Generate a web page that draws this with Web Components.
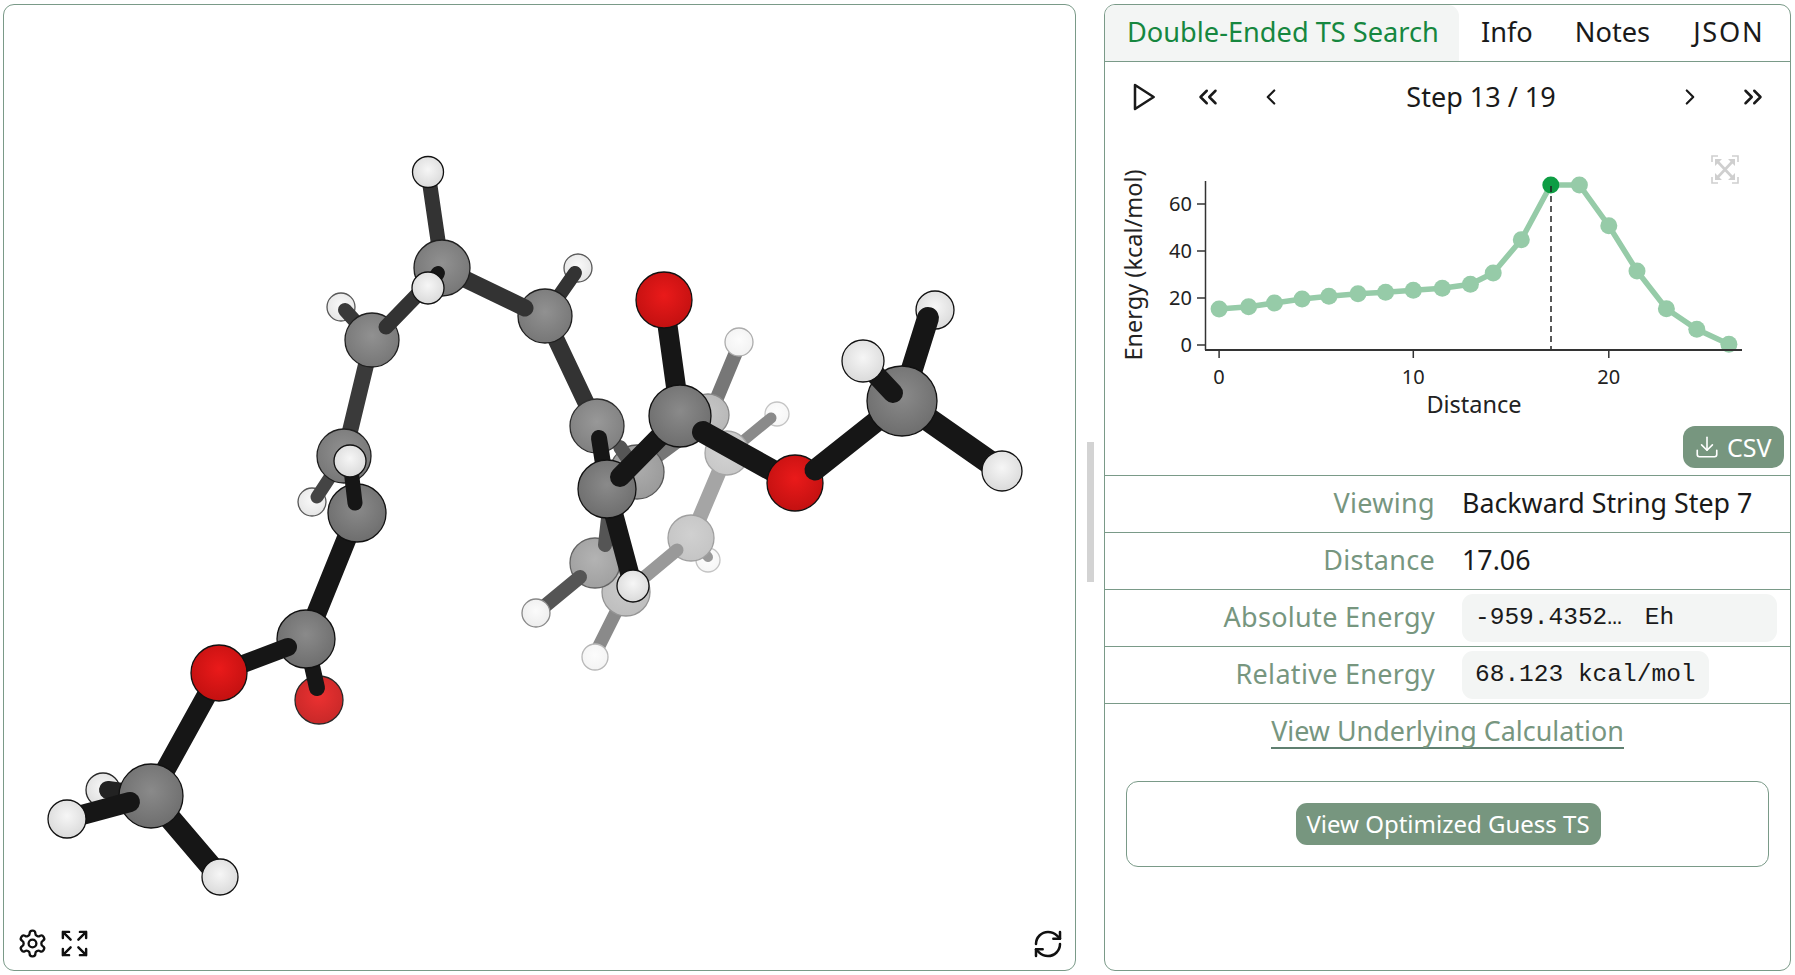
<!DOCTYPE html>
<html lang="en">
<head>
<meta charset="utf-8">
<title>Double-Ended TS Search</title>
<style>
    html, body { margin: 0; height: 100%; background: #fff; }
    body { font-family: "Noto Sans", sans-serif; color: #1a1a1a; overflow: hidden; }
</style>
</head>
<body>
<app-shell>
    <mol-viewer slot="viewer"></mol-viewer>
    <ts-panel slot="panel">
        <tab-bar></tab-bar>
        <step-nav></step-nav>
        <energy-chart></energy-chart>
        <info-row plain label="Viewing">Backward String Step 7</info-row>
        <info-row plain label="Distance">17.06</info-row>
        <info-row label="Absolute Energy"><code-pill wide>-959.4352…&nbsp;<span style="margin-left:8px">Eh</span></code-pill></info-row>
        <info-row label="Relative Energy"><code-pill>68.123 kcal/mol</code-pill></info-row>
        <calc-link></calc-link>
        <guess-box></guess-box>
    </ts-panel>
</app-shell>

<script>
const lucide = {
    play: '<polygon points="6 3 20 12 6 21 6 3"/>',
    dleft: '<path d="m11 17-5-5 5-5"/><path d="m18 17-5-5 5-5"/>',
    left: '<path d="m15 18-6-6 6-6"/>',
    right: '<path d="m9 18 6-6-6-6"/>',
    dright: '<path d="m6 17 5-5-5-5"/><path d="m13 17 5-5-5-5"/>',
    gear: '<path d="M12.22 2h-.44a2 2 0 0 0-2 2v.18a2 2 0 0 1-1 1.73l-.43.25a2 2 0 0 1-2 0l-.15-.08a2 2 0 0 0-2.73.73l-.22.38a2 2 0 0 0 .73 2.73l.15.1a2 2 0 0 1 1 1.72v.51a2 2 0 0 1-1 1.74l-.15.09a2 2 0 0 0-.73 2.73l.22.38a2 2 0 0 0 2.73.73l.15-.08a2 2 0 0 1 2 0l.43.25a2 2 0 0 1 1 1.73V20a2 2 0 0 0 2 2h.44a2 2 0 0 0 2-2v-.18a2 2 0 0 1 1-1.73l.43-.25a2 2 0 0 1 2 0l.15.08a2 2 0 0 0 2.73-.73l.22-.39a2 2 0 0 0-.73-2.73l-.15-.08a2 2 0 0 1-1-1.74v-.5a2 2 0 0 1 1-1.74l.15-.09a2 2 0 0 0 .73-2.73l-.22-.38a2 2 0 0 0-2.73-.73l-.15.08a2 2 0 0 1-2 0l-.43-.25a2 2 0 0 1-1-1.73V4a2 2 0 0 0-2-2z"/><circle cx="12" cy="12" r="3"/>',
    expand: '<path d="m21 21-6-6m6 6v-4.8m0 4.8h-4.8"/><path d="M3 16.2V21m0 0h4.8M3 21l6-6"/><path d="M21 7.8V3m0 0h-4.8M21 3l-6 6"/><path d="M3 7.8V3m0 0h4.8M3 3l6 6"/>',
    refresh: '<path d="M3 12a9 9 0 0 1 9-9 9.75 9.75 0 0 1 6.74 2.74L21 8"/><path d="M21 3v5h-5"/><path d="M21 12a9 9 0 0 1-9 9 9.75 9.75 0 0 1-6.74-2.74L3 16"/><path d="M8 16H3v5"/>',
    download: '<path d="M21 15v4a2 2 0 0 1-2 2H5a2 2 0 0 1-2-2v-4"/><polyline points="7 10 12 15 17 10"/><line x1="12" y1="15" x2="12" y2="3"/>'
};

function icon(name, size, stroke) {
    return `<svg width="${size}" height="${size}" viewBox="0 0 24 24" fill="none" stroke="currentColor" stroke-width="${stroke}" stroke-linecap="round" stroke-linejoin="round">${lucide[name]}</svg>`;
}

class AppShell extends HTMLElement {
    constructor() {
        super();
        this.shadow = this.attachShadow({ mode: 'open' });
    }

    connectedCallback() {
        this.shadow.innerHTML = /*html*/`
        <style>
            :host { display: flex; height: 975px; box-sizing: border-box; padding: 4px 4px 4px 3px; }
            ::slotted([slot="viewer"]) { width: 1073px; flex: none; }
            ::slotted([slot="panel"]) { flex: 1; min-width: 0; }
            .handle { flex: none; width: 7px; height: 140px; margin: 438px 10px 0 11px; background: #d3d3d3; }
        </style>
        <slot name="viewer"></slot>
        <div class="handle"></div>
        <slot name="panel"></slot>
        `;
    }
}
customElements.define('app-shell', AppShell);

// [element, x, y, radius, fog] and [x1, y1, x2, y2, width, colour], in paint order
const H = 'H', C = 'C', O = 'O';
const scene = [
    [H, 708, 560, 12, .75],
    [702, 550, 708, 557, 10, '#999'],
    [H, 777, 414, 12, .75],
    [738, 445, 771, 418, 11, '#8a8a8a'],
    [739, 345, 712, 410, 14, '#777'],
    [H, 739, 342, 14, .65],
    [C, 708, 415, 21, .5],
    [727, 453, 691, 538, 15, '#a5a5a5'],
    [C, 727, 453, 22, .62],
    [C, 691, 538, 23, .6],
    [626, 592, 597, 650, 13, '#8a8a8a'],
    [H, 595, 657, 13, .7],
    [C, 626, 592, 24, .55],
    [677, 550, 635, 585, 13, '#999'],
    [C, 595, 563, 25, .35],
    [580, 577, 540, 610, 14, '#555'],
    [H, 536, 613, 14, .5],
    [605, 545, 610, 500, 14, '#555'],
    [650, 462, 700, 425, 13, '#777'],
    [C, 637, 472, 27, .3],
    [620, 447, 630, 462, 14, '#555'],
    [545, 316, 597, 426, 17, '#333'],
    [C, 597, 426, 27, .12],
    [599, 438, 607, 489, 16, '#161616'],
    [607, 489, 633, 586, 19, '#161616'],
    [H, 633, 586, 16, 0],
    [C, 607, 489, 29, 0],
    [620, 477, 680, 416, 20, '#161616'],

    [680, 416, 664, 300, 20, '#161616'],
    [O, 664, 300, 28, 0],
    [C, 680, 416, 31, 0],
    [703, 432, 795, 483, 22, '#161616'],
    [O, 795, 483, 28, 0],
    [815, 470, 902, 401, 21, '#161616'],
    [902, 401, 1002, 471, 24, '#161616'],
    [H, 1002, 471, 20, 0],
    [H, 935, 310, 19, 0],
    [902, 401, 928, 318, 22, '#161616'],
    [C, 902, 401, 35, 0],
    [893, 393, 863, 361, 20, '#161616'],
    [H, 863, 361, 21, 0],

    [428, 172, 442, 268, 15, '#333'],
    [H, 428, 172, 15.5, 0],
    [H, 578, 268, 14, .3],
    [575, 273, 545, 316, 14, '#333'],
    [C, 545, 316, 27, .06],
    [442, 268, 525, 308, 17, '#333'],
    [C, 442, 268, 28, .06],
    [H, 341, 307, 14, .3],
    [345, 310, 372, 340, 14, '#3a3a3a'],
    [372, 340, 344, 456, 16, '#3a3a3a'],
    [C, 372, 340, 27, .06],
    [386, 327, 420, 292, 15, '#333'],
    [438, 273, 428, 288, 14, '#161616'],
    [H, 428, 288, 16, 0],
    [H, 312, 502, 14, .3],
    [317, 497, 344, 456, 13, '#444'],
    [C, 344, 456, 27, .06],
    [357, 513, 306, 639, 20, '#161616'],
    [C, 357, 513, 29, 0],
    [355, 503, 350, 461, 15, '#161616'],
    [H, 350, 461, 16, 0],

    [O, 319, 700, 24, .1],
    [317, 688, 306, 639, 16, '#161616'],
    [C, 306, 639, 29, 0],
    [288, 647, 219, 673, 18, '#161616'],
    [219, 673, 151, 796, 20, '#161616'],
    [O, 219, 673, 28, 0],
    [H, 103, 790, 17, .1],
    [108, 790, 151, 796, 18, '#222'],
    [151, 796, 220, 877, 22, '#161616'],
    [H, 220, 877, 18, 0],
    [C, 151, 796, 32, 0],
    [130, 802, 67, 819, 20, '#161616'],
    [H, 67, 819, 19, 0]
];

const atomColors = {
    H: ['#f6f6f6', '#d8d8d8'],
    C: ['#8a8a8a', '#6c6c6c'],
    O: ['#ea1a1a', '#c01010']
};

function fogged(hex, fog) {
    const n = parseInt(hex.slice(1), 16);
    const mix = (v) => Math.round(v + (255 - v) * fog);
    return `rgb(${mix(n >> 16)},${mix((n >> 8) & 255)},${mix(n & 255)})`;
}

class MolViewer extends HTMLElement {
    constructor() {
        super();
        this.shadow = this.attachShadow({ mode: 'open' });
    }

    connectedCallback() {
        this.render();
    }

    render() {
        let defs = '';
        let body = '';
        scene.forEach((item, i) => {
            if (typeof item[0] === 'string') {
                const [el, x, y, r, fog] = item;
                const [inner, outer] = atomColors[el];
                defs += `<radialGradient id="g${i}" cx="50%" cy="42%" r="62%"><stop offset="0" stop-color="${fogged(inner, fog)}"/><stop offset="1" stop-color="${fogged(outer, fog)}"/></radialGradient>`;
                body += `<circle cx="${x}" cy="${y}" r="${r}" fill="url(#g${i})" stroke="${fogged('#111111', fog)}" stroke-width="1.3"/>`;
            } else {
                const [x1, y1, x2, y2, w, color] = item;
                body += `<line x1="${x1}" y1="${y1}" x2="${x2}" y2="${y2}" stroke="${color}" stroke-width="${w}" stroke-linecap="round"/>`;
            }
        });

        this.shadow.innerHTML = /*html*/`
        <style>
            :host { display: block; position: relative; box-sizing: border-box; height: 100%; border: 1px solid #7a9a88; border-radius: 11px; overflow: hidden; }
            svg.mol { display: block; width: 100%; height: 100%; }
            .tools { position: absolute; left: 13px; bottom: 11px; display: flex; gap: 11px; color: #111; }
            .reload { position: absolute; right: 11px; bottom: 10px; color: #111; }
            .tools svg, .reload svg { display: block; }
        </style>
        <svg class="mol" viewBox="4 5 1071 965">
            <defs>${defs}</defs>
            ${body}
        </svg>
        <div class="tools">${icon('gear', 31, 1.8)}${icon('expand', 31, 1.9)}</div>
        <div class="reload">${icon('refresh', 32, 1.9)}</div>
        `;
    }
}
customElements.define('mol-viewer', MolViewer);

class TsPanel extends HTMLElement {
    constructor() {
        super();
        this.shadow = this.attachShadow({ mode: 'open' });
    }

    connectedCallback() {
        this.shadow.innerHTML = /*html*/`
        <style>
            :host { display: flex; flex-direction: column; box-sizing: border-box; height: 100%; border: 1px solid #7a9a88; border-radius: 11px; overflow: hidden; }
        </style>
        <slot></slot>
        `;
    }
}
customElements.define('ts-panel', TsPanel);

class TabBar extends HTMLElement {
    constructor() {
        super();
        this.shadow = this.attachShadow({ mode: 'open' });
    }

    connectedCallback() {
        this.shadow.innerHTML = /*html*/`
        <style>
            :host { display: flex; flex: none; height: 57px; box-sizing: border-box; border-bottom: 1px solid #7a9a88; font-size: 27.2px; }
            div { display: flex; align-items: center; padding: 0 21px 3px; white-space: nowrap; }
            .on { color: #16873f; background: #f3f5f4; padding: 0 0 3px 22px; border-radius: 0 11px 0 0; width: 354px; box-sizing: border-box; }
            .info { margin-left: 1px; }
            .json { margin-left: 1px; padding-right: 0; letter-spacing: 1.8px; }
        </style>
        <div class="on">Double-Ended TS Search</div>
        <div class="info">Info</div>
        <div>Notes</div>
        <div class="json">JSON</div>
        `;
    }
}
customElements.define('tab-bar', TabBar);

class StepNav extends HTMLElement {
    constructor() {
        super();
        this.shadow = this.attachShadow({ mode: 'open' });
    }

    connectedCallback() {
        this.shadow.innerHTML = /*html*/`
        <style>
            :host { display: flex; flex: none; height: 71px; box-sizing: border-box; padding-bottom: 2px; align-items: center; font-size: 27px; color: #1a1a1a; }
            svg { display: block; flex: none; }
            .play { margin-left: 22px; }
            .dl { margin-left: 34px; }
            .l { margin-left: 35px; }
            .step { flex: 1; text-align: center; padding-left: 1px; white-space: nowrap; }
            .r { margin-right: 35px; }
            .dr { margin-right: 22px; }
        </style>
        <span class="play">${icon('play', 32, 1.9)}</span>
        <span class="dl">${icon('dleft', 30, 2)}</span>
        <span class="l">${icon('left', 26, 2)}</span>
        <span class="step">Step 13 / 19</span>
        <span class="r">${icon('right', 26, 2)}</span>
        <span class="dr">${icon('dright', 30, 2)}</span>
        `;
    }
}
customElements.define('step-nav', StepNav);

const energyPoints = [
    [1219.1, 309], [1248.6, 306.7], [1274.5, 303], [1302.1, 299], [1328.9, 296.3],
    [1358, 293.7], [1385.6, 292.3], [1413.3, 290.3], [1442.3, 288.3], [1470.4, 284.3],
    [1493.2, 273], [1521.3, 239.7], [1550.8, 185], [1579.4, 185], [1608.8, 225.7],
    [1637, 271], [1666.4, 308.7], [1696.8, 329.3], [1728.9, 344.3]
];

class EnergyChart extends HTMLElement {
    constructor() {
        super();
        this.shadow = this.attachShadow({ mode: 'open' });
    }

    connectedCallback() {
        const line = energyPoints.map((p) => p.join(',')).join(' ');
        const dots = energyPoints.map((p, i) => i === 12 ? '' : `<circle cx="${p[0]}" cy="${p[1]}" r="8.5" fill="#96cba8"/>`).join('');
        const yTicks = [[345, '0'], [298, '20'], [251, '40'], [204, '60']]
            .map(([y, t]) => `<line x1="1197" y1="${y}" x2="1205" y2="${y}"/><text class="t" x="1192" y="${y + 7}" text-anchor="end">${t}</text>`).join('');
        const xTicks = [[1219.1, '0'], [1413.3, '10'], [1608.8, '20']]
            .map(([x, t]) => `<line x1="${x}" y1="350" x2="${x}" y2="358"/><text class="t" x="${x}" y="384" text-anchor="middle">${t}</text>`).join('');

        this.shadow.innerHTML = /*html*/`
        <style>
            :host { display: flex; flex-direction: column; flex: none; height: 342px; }
            svg.plot { display: block; width: 685px; height: 293px; flex: none; margin-bottom: 0; }
            text { font-family: inherit; fill: #222; }
            .t { font-size: 20px; }
            .axis { font-size: 23.5px; }
            .ticks line { stroke: #333; stroke-width: 1.5; }
            button { align-self: flex-end; display: flex; align-items: center; gap: 7px; box-sizing: border-box; width: 101px; height: 42px; margin-right: 6px; padding: 0 0 0 11px; border: 0; border-radius: 12px; background: #77967f; color: #fff; font: inherit; font-size: 25px; }
            button svg { display: block; flex: none; }
        </style>
        <svg class="plot" viewBox="1105 133 685 293">
            <polyline points="${line}" fill="none" stroke="#96cba8" stroke-width="5.5"/>
            ${dots}
            <circle cx="1550.8" cy="185" r="8.5" fill="#0e9d44"/>
            <line x1="1551" y1="186" x2="1551" y2="350" stroke="#222" stroke-width="1.5" stroke-dasharray="6 4"/>
            <g class="ticks">
                <line x1="1205.5" y1="181" x2="1205.5" y2="350"/>
                <line x1="1205" y1="350" x2="1742" y2="350" style="stroke-width:2"/>
                ${yTicks}${xTicks}
            </g>
            <text class="axis" x="1474" y="413" text-anchor="middle">Distance</text>
            <text class="axis" transform="translate(1142 265) rotate(-90)" text-anchor="middle">Energy (kcal/mol)</text>
            <g fill="none" stroke="#cfcfcf" stroke-width="1.6" transform="translate(0 1)">
                <path d="M1718 155h-6v6M1732 155h6v6M1738 176v6h-6M1718 182h-6v-6"/>
                <path stroke-width="2.6" d="M1717 160l16 17M1733 160l-16 17"/>
                <path fill="#cfcfcf" stroke="none" d="M1715 158h7l-7 7zM1735 158h-7l7 7zM1735 179h-7l7-7zM1715 179h7l-7-7z"/>
            </g>
        </svg>
        <button>${icon('download', 26, 1.5)}<span>CSV</span></button>
        `;
    }
}
customElements.define('energy-chart', EnergyChart);

class InfoRow extends HTMLElement {
    constructor() {
        super();
        this.shadow = this.attachShadow({ mode: 'open' });
    }

    connectedCallback() {
        this.shadow.innerHTML = /*html*/`
        <style>
            :host { display: grid; grid-template-columns: 330px 1fr; flex: none; height: 57px; box-sizing: border-box; border-top: 1px solid #7a9a88; align-items: center; font-size: 26.8px; }
            .label { text-align: right; color: #77967f; font-size: 27px; letter-spacing: .3px; padding-bottom: 3px; }
            .value { padding-left: 27px; padding-right: 13px; display: block; white-space: nowrap; }
            :host([plain]) .value { padding-bottom: 3px; }
        </style>
        <span class="label">${this.getAttribute('label')}</span>
        <span class="value"><slot></slot></span>
        `;
    }
}
customElements.define('info-row', InfoRow);

class CodePill extends HTMLElement {
    constructor() {
        super();
        this.shadow = this.attachShadow({ mode: 'open' });
    }

    connectedCallback() {
        this.shadow.innerHTML = /*html*/`
        <style>
            :host { display: block; width: fit-content; box-sizing: border-box; height: 48px; line-height: 48px; padding: 0 13px; border-radius: 11px; background: #f3f5f4; font-family: "Liberation Mono", monospace; font-size: 24.5px; color: #1a1a1a; }
            :host([wide]) { width: 100%; }
        </style>
        <slot></slot>
        `;
    }
}
customElements.define('code-pill', CodePill);

class CalcLink extends HTMLElement {
    constructor() {
        super();
        this.shadow = this.attachShadow({ mode: 'open' });
    }

    connectedCallback() {
        this.shadow.innerHTML = /*html*/`
        <style>
            :host { display: flex; justify-content: center; flex: none; box-sizing: border-box; border-top: 1px solid #7a9a88; height: 78px; padding-top: 9px; font-size: 26.9px; }
            a { display: block; height: 34px; line-height: 36px; color: #77967f; text-decoration: none; border-bottom: 2px solid #5f7f70; }
        </style>
        <a href="#">View Underlying Calculation</a>
        `;
    }
}
customElements.define('calc-link', CalcLink);

class GuessBox extends HTMLElement {
    constructor() {
        super();
        this.shadow = this.attachShadow({ mode: 'open' });
    }

    connectedCallback() {
        this.shadow.innerHTML = /*html*/`
        <style>
            :host { display: flex; justify-content: center; align-items: center; flex: none; box-sizing: border-box; height: 86px; margin: 0 21px; border: 1px solid #7a9a88; border-radius: 12px; }
            button { box-sizing: border-box; width: 305px; height: 42px; padding: 0 0 2px; margin-left: 1px; border: 0; border-radius: 11px; background: #77967f; color: #fff; font: inherit; font-size: 24px; white-space: nowrap; }
        </style>
        <button>View Optimized Guess TS</button>
        `;
    }
}
customElements.define('guess-box', GuessBox);
</script>
</body>
</html>
